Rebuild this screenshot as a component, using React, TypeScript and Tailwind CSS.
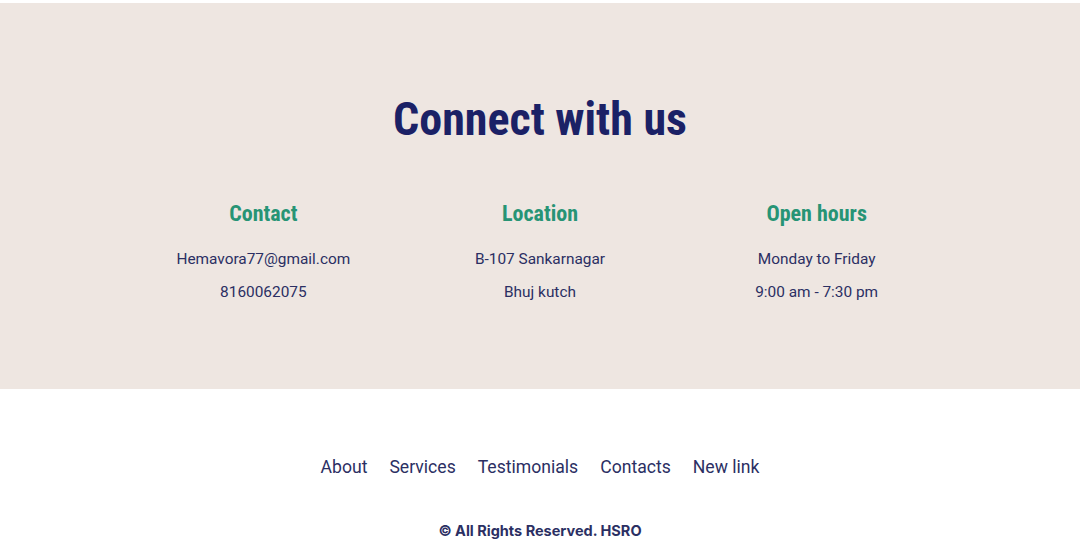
import React from "react";

const cols = [
  { t: "Contact", l: ["Hemavora77@gmail.com", "8160062075"] },
  { t: "Location", l: ["B-107 Sankarnagar", "Bhuj kutch"] },
  { t: "Open hours", l: ["Monday to Friday", "9:00 am - 7:30 pm"] },
];

export default function App() {
  return (
    <div className="w-[1080px] h-[558px] bg-white overflow-hidden" style={{ fontFamily: "Roboto, sans-serif" }}>
      <div className="mt-[3px] h-[386px] bg-[#eee6e1] flex flex-col items-center">
        <h1 className="mt-[89px] text-[46px] leading-[54px] font-bold text-[#1b2166] [font-stretch:condensed]" style={{ fontFamily: "'Roboto Condensed', Roboto, sans-serif" }}>
          Connect with us
        </h1>
        <div className="mt-[54px] w-[830px] grid grid-cols-3">
          {cols.map((c) => (
            <div key={c.t} className="flex flex-col items-center">
              <div className="mt-[1px] text-[22px] leading-[26px] font-bold text-[#279475] [font-stretch:condensed]" style={{ fontFamily: "'Roboto Condensed', Roboto, sans-serif" }}>{c.t}</div>
              <div className="mt-[16px] text-[15.4px] leading-[33px] text-[#2b2f63]">
                {c.l.map((x) => (
                  <div key={x} className="text-center">{x}</div>
                ))}
              </div>
            </div>
          ))}
        </div>
      </div>
      <div className="mt-[66px] flex justify-center gap-[22px] text-[17.6px] leading-[24px] text-[#2b2f63]">
        {["About", "Services", "Testimonials", "Contacts", "New link"].map((x) => (
          <span key={x}>{x}</span>
        ))}
      </div>
      <div className="mt-[43px] text-center text-[14.5px] leading-[18px] font-bold text-[#2b2f63]" style={{ fontFamily: "Inter, sans-serif" }}>
        © All Rights Reserved. HSRO
      </div>
    </div>
  );
}
